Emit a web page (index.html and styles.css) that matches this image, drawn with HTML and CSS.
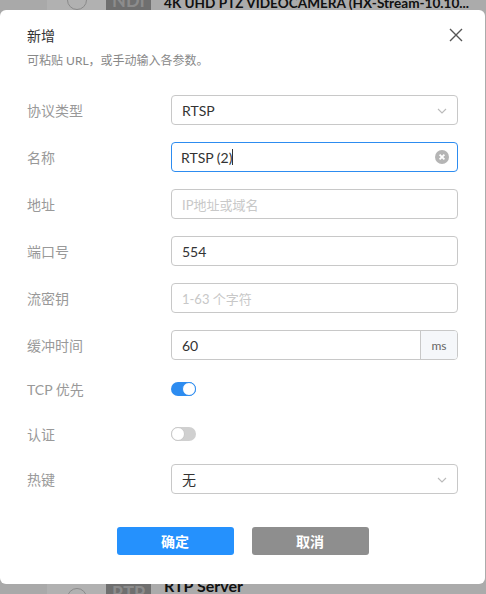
FILE: index.html
```html
<!DOCTYPE html>
<html lang="zh">
<head>
<meta charset="utf-8">
<link rel="stylesheet" href="styles.css">
</head>
<body>
<div class="bg">
  <div class="bg-row top">
    <div class="c1"></div>
    <div class="c2"><span class="radio"></span></div>
    <div class="badge">NDI</div>
    <div class="name">4K UHD PTZ VIDEOCAMERA (HX-Stream-10.10...</div>
  </div>
  <div class="bg-fill"></div>
  <div class="bg-row bottom">
    <div class="c1"></div>
    <div class="c2"><span class="radio"></span></div>
    <div class="badge">RTP</div>
    <div class="name">RTP Server</div>
  </div>
</div>

<div class="modal">
  <div class="head">
    <div class="title">新增</div>
    <div class="sub">可粘贴 URL，或手动输入各参数。</div>
    <svg class="close" width="14" height="14" viewBox="0 0 14 14"><path d="M1 1L13 13M13 1L1 13" stroke="#555" stroke-width="1.4" fill="none"/></svg>
  </div>
  <div class="form">
    <div class="row">
      <div class="label">协议类型</div>
      <div class="field select"><span>RTSP</span>
        <svg class="arrow" width="10" height="6" viewBox="0 0 10 6"><path d="M1 1L5 5L9 1" stroke="#bbb" stroke-width="1.1" fill="none"/></svg>
      </div>
    </div>
    <div class="row">
      <div class="label">名称</div>
      <div class="field focus"><span>RTSP (2)</span><span class="caret"></span>
        <svg class="clear" width="14" height="14" viewBox="0 0 14 14"><circle cx="7" cy="7" r="7" fill="#b5b5b5"/><path d="M4.6 4.6L9.4 9.4M9.4 4.6L4.6 9.4" stroke="#fff" stroke-width="1.8"/></svg>
      </div>
    </div>
    <div class="row">
      <div class="label">地址</div>
      <div class="field"><span class="ph">IP地址或域名</span></div>
    </div>
    <div class="row">
      <div class="label">端口号</div>
      <div class="field"><span>554</span></div>
    </div>
    <div class="row">
      <div class="label">流密钥</div>
      <div class="field"><span class="ph">1-63 个字符</span></div>
    </div>
    <div class="row">
      <div class="label">缓冲时间</div>
      <div class="field group"><span class="val">60</span><span class="addon">ms</span></div>
    </div>
    <div class="row tog first">
      <div class="label">TCP 优先</div>
      <div class="switch on"><span class="knob"></span></div>
    </div>
    <div class="row tog">
      <div class="label">认证</div>
      <div class="switch"><span class="knob"></span></div>
    </div>
    <div class="row">
      <div class="label">热键</div>
      <div class="field select"><span>无</span>
        <svg class="arrow" width="10" height="6" viewBox="0 0 10 6"><path d="M1 1L5 5L9 1" stroke="#bbb" stroke-width="1.1" fill="none"/></svg>
      </div>
    </div>
  </div>
  <div class="actions">
    <button class="btn ok">确定</button>
    <button class="btn cancel">取消</button>
  </div>
</div>
</body>
</html>
```

FILE: styles.css
```css
* { box-sizing: border-box; }
html, body { margin: 0; padding: 0; }
body {
  width: 486px;
  height: 594px;
  overflow: hidden;
  position: relative;
  font-family: Lato, "Noto Sans CJK SC", sans-serif;
  background: #ababab;
}
.bg { display: flex; flex-direction: column; height: 594px; }
.bg-row { display: flex; height: 40px; flex: none; }
.bg-row.top { margin-top: -20px; }
.bg-row.top .name { padding-top: 3px; }
.bg-row.bottom { height: 30px; }
.bg-row.bottom .name { padding-top: 14px; line-height: 16px; font-size: 16px; }
.bg-row.bottom .badge { align-items: flex-start; padding-top: 18px; }
.bg-row.bottom .c2 { align-items: flex-start; padding-top: 24px; }
.bg-fill { flex: 1; display: flex; }
.bg-fill::before { content: ""; width: 47px; background: #a9a9a9; }
.c1 { flex: none; width: 47px; background: #a9a9a9; }
.c2 { flex: none; width: 59px; background: #b1b1b1; display: flex; align-items: center; justify-content: center; }
.radio { width: 20px; height: 20px; border: 1px solid #8a8a8a; border-radius: 50%; }
.badge { flex: none; width: 45px; background: #6f6f6f; color: #8c8c8c; font-weight: 700; font-size: 18px; display: flex; align-items: center; justify-content: center; }
.name { flex: 1; min-width: 0; overflow: hidden; padding-left: 13px; font-weight: 700; font-size: 13.6px; line-height: 40px; color: #111; white-space: nowrap; }

.modal {
  position: absolute;
  left: 0; top: 10px;
  width: 485px; height: 574px;
  background: #fff;
  border-radius: 6px;
}
.head { position: relative; padding: 16px 27px 0; }
.title { font-size: 14px; color: #333; line-height: 20px; }
.sub { font-size: 12px; color: #888; line-height: 18px; margin-top: 6px; }
.close { position: absolute; right: 22px; top: 18px; }

.form { padding: 25px 27px 0 27px; display: flex; flex-direction: column; gap: 17px; }
.row { display: flex; align-items: center; height: 30px; }
.row.tog { height: 26px; margin-top: 2px; }
.row.tog.first { margin-top: -1px; }
.label { width: 144px; font-size: 14px; color: #999; }
.field {
  flex: 1;
  height: 30px;
  border: 1px solid #c8c8c8;
  border-radius: 4px;
  display: flex;
  align-items: center;
  padding: 0 10px;
  font-size: 14px;
  color: #333;
  position: relative;
}
.field.focus { border-color: #2d8cf0; padding-left: 9px; }
.caret { width: 1px; height: 16px; background: #333; margin-left: 0; }
.ph { color: #c8c8c8; font-size: 13px; }
.arrow { position: absolute; right: 10px; top: 12px; }
.clear { position: absolute; right: 8px; top: 7px; }
.field.group { padding: 0; overflow: hidden; }
.field.group .val { flex: 1; padding-left: 10px; }
.addon { width: 37px; height: 100%; background: #f5f7fa; border-left: 1px solid #c8c8c8; color: #666; font-size: 12px; display: flex; align-items: center; justify-content: center; }

.switch { width: 25px; height: 14px; border-radius: 7px; background: #d0d0d0; position: relative; }
.switch .knob { position: absolute; left: 0; top: 0; width: 14px; height: 14px; border-radius: 50%; background: #fff; border: 1px solid #c8c8c8; }
.switch.on { background: #2d8cf0; }
.switch.on .knob { left: 11px; border-color: #2d8cf0; }

.actions { display: flex; justify-content: center; gap: 18px; padding-top: 33px; }
.btn { width: 117px; height: 28px; border: 0; border-radius: 3px; color: #fff; font-size: 14px; font-family: Lato, "Noto Sans CJK SC", sans-serif; font-weight: 700; }
.btn.ok { background: #2591fd; }
.btn.cancel { background: #8e8e8e; }
```
